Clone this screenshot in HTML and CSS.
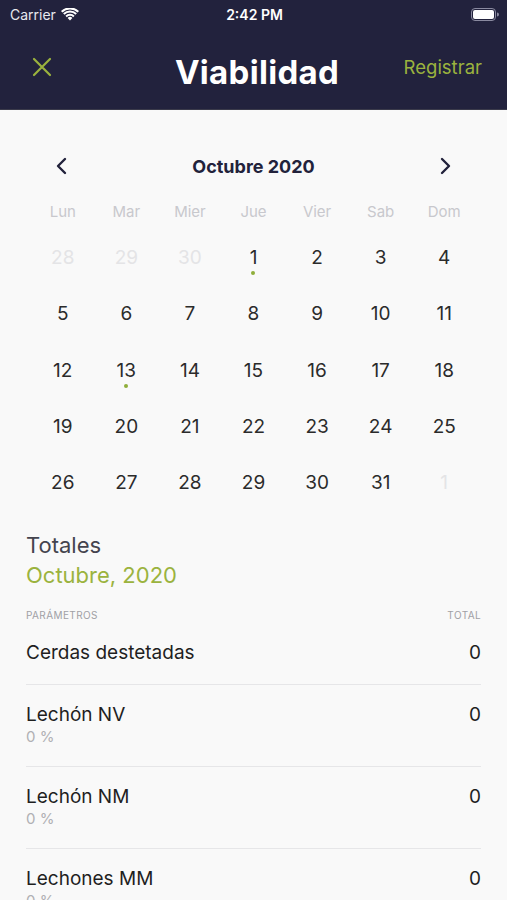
FILE: index.html
```html
<!DOCTYPE html>
<html lang="es">
<head>
  <meta charset="UTF-8">
  <meta name="viewport" content="width=device-width, initial-scale=1.0">
  <title>Viabilidad</title>
  <link rel="stylesheet" href="styles.css">
</head>
<body>
  <header>
    <div class="status">
      <div class="status-left">
        Carrier
        <svg class="wifi" width="18" height="13" viewBox="0 0 18 13">
          <path d="M9 12.5 L6.6 9.9 A3.4 3.4 0 0 1 11.4 9.9 Z" fill="#fff"/>
          <path d="M4.4 7.7 A6.5 6.5 0 0 1 13.6 7.7 L12.2 9.2 A4.5 4.5 0 0 0 5.8 9.2 Z" fill="#fff"/>
          <path d="M2.1 5.3 A9.8 9.8 0 0 1 15.9 5.3 L14.5 6.8 A7.8 7.8 0 0 0 3.5 6.8 Z" fill="#fff"/>
          <path d="M0 3 A13 13 0 0 1 18 3 L16.6 4.5 A11 11 0 0 0 1.4 4.5 Z" fill="#fff"/>
        </svg>
      </div>
      <div class="status-time">2:42 PM</div>
      <div class="status-right">
        <svg width="28" height="13" viewBox="0 0 28 13">
          <rect x="0.5" y="0.5" width="24" height="12" rx="3.5" fill="none" stroke="#8a8aa0"/>
          <rect x="2" y="2" width="21" height="9" rx="2" fill="#fff"/>
          <path d="M26 4.5 a1.8 1.8 0 0 1 0 4 z" fill="#8a8aa0"/>
        </svg>
      </div>
    </div>
    <nav class="nav">
      <svg class="close" width="20" height="20" viewBox="0 0 20 20">
        <path d="M2 2 L18 18 M18 2 L2 18" stroke="#9bb33e" stroke-width="2.2" stroke-linecap="round"/>
      </svg>
      <h1>Viabilidad</h1>
      <a class="action">Registrar</a>
    </nav>
  </header>

  <main>
    <section class="calendar">
      <div class="month">
        <svg width="14" height="18" viewBox="0 0 14 18">
          <path d="M10 2 L3 9 L10 16" fill="none" stroke="#22223b" stroke-width="2.4" stroke-linecap="round" stroke-linejoin="round"/>
        </svg>
        <h2>Octubre 2020</h2>
        <svg width="14" height="18" viewBox="0 0 14 18">
          <path d="M4 2 L11 9 L4 16" fill="none" stroke="#22223b" stroke-width="2.4" stroke-linecap="round" stroke-linejoin="round"/>
        </svg>
      </div>
      <div class="grid weekdays">
        <span>Lun</span><span>Mar</span><span>Mier</span><span>Jue</span><span>Vier</span><span>Sab</span><span>Dom</span>
      </div>
      <div class="grid days">
        <span class="out">28</span><span class="out">29</span><span class="out">30</span><span class="mark">1</span><span>2</span><span>3</span><span>4</span>
        <span>5</span><span>6</span><span>7</span><span>8</span><span>9</span><span>10</span><span>11</span>
        <span>12</span><span class="mark">13</span><span>14</span><span>15</span><span>16</span><span>17</span><span>18</span>
        <span>19</span><span>20</span><span>21</span><span>22</span><span>23</span><span>24</span><span>25</span>
        <span>26</span><span>27</span><span>28</span><span>29</span><span>30</span><span>31</span><span class="out">1</span>
      </div>
    </section>

    <section class="totals">
      <h3>Totales</h3>
      <div class="period">Octubre, 2020</div>
      <div class="cols">
        <span>PARÁMETROS</span>
        <span>TOTAL</span>
      </div>
      <ul class="list">
        <li class="row">
          <div class="name">Cerdas destetadas</div>
          <div class="value">0</div>
        </li>
        <li class="row">
          <div>
            <div class="name">Lechón NV</div>
            <div class="sub">0 %</div>
          </div>
          <div class="value">0</div>
        </li>
        <li class="row">
          <div>
            <div class="name">Lechón NM</div>
            <div class="sub">0 %</div>
          </div>
          <div class="value">0</div>
        </li>
        <li class="row">
          <div>
            <div class="name">Lechones MM</div>
            <div class="sub">0 %</div>
          </div>
          <div class="value">0</div>
        </li>
      </ul>
    </section>
  </main>
</body>
</html>
```

FILE: styles.css
```css
body {
  font-family: Inter, 'Liberation Sans', sans-serif;
  background: #f9f9f9;
  color: #222;
  margin: 0;
  padding: 0;
  height: 900px;
  overflow: hidden;
}
header {
  background: #22223d;
  color: #fff;
  border-bottom: 1px solid #3a3a4a;
}
.status {
  height: 28px;
  display: grid;
  grid-template-columns: 1fr auto 1fr;
  align-items: center;
  padding: 0 8px 0 10px;
  font-size: 14px;
}
.status-left {
  display: flex;
  align-items: center;
  gap: 5px;
  color: #e8e8ee;
}
.status-time {
  font-weight: 600;
}
.status-right {
  display: flex;
  justify-content: flex-end;
}
.nav {
  height: 81px;
  display: grid;
  grid-template-columns: 1fr auto 1fr;
  align-items: center;
  padding: 0 25px 0 32px;
}
.nav h1 {
  margin: 6px 0 0;
  font-size: 33px;
  font-weight: 700;
  letter-spacing: 0.3px;
}
.close {
  margin-top: -3px;
}
.action {
  justify-self: end;
  color: #9bb33e;
  font-size: 18.5px;
  margin-top: -3px;
}
.calendar {
  margin: 0 31px;
  padding-top: 36px;
}
.month {
  height: 40px;
  display: flex;
  align-items: center;
  justify-content: space-between;
  padding: 0 24px 0 24px;
}
.month h2 {
  margin: 0;
  font-size: 18px;
  font-weight: 700;
  color: #22223b;
}
.grid {
  display: grid;
  grid-template-columns: repeat(7, 1fr);
  text-align: center;
}
.weekdays {
  margin-top: 11px;
  height: 30px;
  line-height: 30px;
  font-size: 15px;
  color: #c8c8cd;
}
.days {
  margin-top: 3px;
  grid-auto-rows: 56.3px;
  font-size: 19px;
  color: #2b2b2b;
}
.days span {
  position: relative;
  line-height: 56px;
}
.days .out {
  color: #e4e4e6;
}
.mark::after {
  content: "";
  position: absolute;
  left: 50%;
  top: 41px;
  width: 4px;
  height: 4px;
  margin-left: -2px;
  border-radius: 50%;
  background: #8fae3a;
}
.totals {
  margin: 0 26px;
  padding-top: 19px;
}
.totals h3 {
  margin: 0;
  font-size: 22px;
  font-weight: 400;
  line-height: 30px;
  color: #44444e;
}
.period {
  font-size: 22px;
  line-height: 30px;
  color: #9bb33e;
}
.cols {
  display: flex;
  justify-content: space-between;
  margin-top: 18px;
  font-size: 10px;
  line-height: 14px;
  letter-spacing: 0.4px;
  color: #a0a0a5;
}
.list {
  list-style: none;
  margin: 0;
  padding: 0;
}
.row {
  display: flex;
  justify-content: space-between;
  align-items: flex-start;
  padding: 18px 0 19px;
  border-bottom: 1px solid #e6e6e8;
}
.row:first-child {
  padding-top: 19px;
}
.name, .value {
  font-size: 19px;
  line-height: 24px;
  color: #1f1f1f;
}
.sub {
  font-size: 15px;
  line-height: 20px;
  color: #b0b0b4;
}
```
